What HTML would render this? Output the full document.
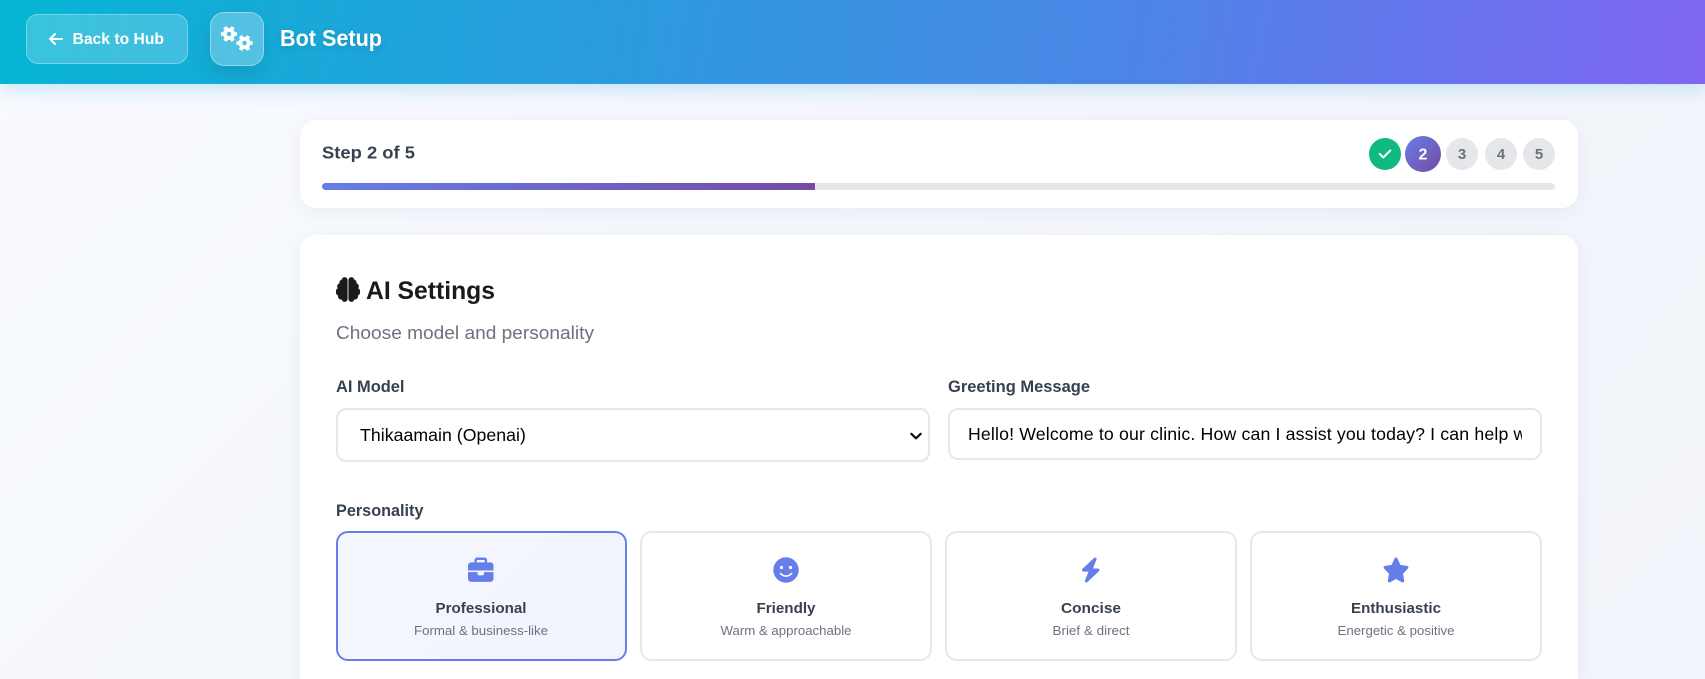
<!DOCTYPE html>
<html lang="en"><head><meta charset="utf-8"><title>Bot Setup</title>
<style>
*{box-sizing:border-box}
html,body{margin:0;padding:0;width:1705px;height:679px;overflow:hidden}
body{position:relative;background:linear-gradient(135deg,#f9fbff 0%,#f4f7fc 45%,#f1f4fa 100%);font-family:"Liberation Sans",sans-serif}
.abs{position:absolute}
.header{left:0;top:0;width:1705px;height:84px;background:linear-gradient(100deg,#06b6d4 0%,#4a86e6 65%,#8065f2 100%);box-shadow:0 4px 20px rgba(6,140,212,.22)}
.back{left:26px;top:14px;width:162px;height:50px;border-radius:12px;background:rgba(255,255,255,.2);border:1px solid rgba(255,255,255,.3)}
.gear{left:210px;top:12px;width:54px;height:54px;border-radius:14px;background:rgba(255,255,255,.27);border:1px solid rgba(255,255,255,.35);box-shadow:0 8px 20px rgba(0,0,0,.1)}
.card{background:#fff;box-shadow:0 4px 20px rgba(30,50,100,.06)}
.c1{left:300px;top:120px;width:1278px;height:88px;border-radius:16px}
.c2{left:300px;top:235px;width:1278px;height:444px;border-radius:16px 16px 0 0}
.track{left:322px;top:183px;width:1233px;height:7px;border-radius:4px;background:#e5e7eb}
.fill{left:322px;top:183px;width:493px;height:7px;border-radius:4px 0 0 4px;background:linear-gradient(90deg,#667eea,#764ba2)}
.dot{border-radius:50%;top:138px;width:32px;height:32px;background:#e5e7eb}
.field{border:2px solid #e5e7eb;border-radius:10px;background:#fff;color:#000;font:17.7px "Liberation Sans",sans-serif;outline:0}
select.field{left:336px;top:408px;width:594px;height:54px;padding:0 0 0 22px;letter-spacing:.04px;appearance:none;-webkit-appearance:none}
input.field{left:948px;top:408px;width:594px;height:52px;padding:0 18px;letter-spacing:.16px}
.p{top:531px;width:291.5px;height:130px;border-radius:12px;border:2px solid #e5e7eb;background:#fff}
.p.on{width:290.5px;border-color:#667eea;background:linear-gradient(135deg,#f5f7ff,#f1f4fd)}
svg.ov{position:absolute;left:0;top:0;pointer-events:none}
text{font-family:"Liberation Sans",sans-serif}
.lb{font-size:16.4px;font-weight:700;fill:#374151}
.t{font-size:15px;font-weight:700;fill:#374151;text-anchor:middle}
.s{font-size:12.8px;fill:#6b7280;text-anchor:middle}
.n{font-size:15px;font-weight:700;fill:#6b7280;text-anchor:middle}
</style></head><body>
<div class="abs header"></div>
<div class="abs back"></div>
<div class="abs gear"></div>
<div class="abs card c1"></div>
<div class="abs card c2"></div>
<div class="abs track"></div>
<div class="abs fill"></div>
<div class="abs dot" style="left:1369px;background:#10b981"></div>
<div class="abs dot" style="left:1405px;top:136px;width:36px;height:36px;background:linear-gradient(135deg,#667eea,#764ba2)"></div>
<div class="abs dot" style="left:1446px"></div>
<div class="abs dot" style="left:1485px"></div>
<div class="abs dot" style="left:1523px"></div>
<select class="abs field"><option>Thikaamain (Openai)</option></select>
<input class="abs field" value="Hello! Welcome to our clinic. How can I assist you today? I can help with appointments">
<div class="abs p on" style="left:336px"></div>
<div class="abs p" style="left:640px"></div>
<div class="abs p" style="left:945px"></div>
<div class="abs p" style="left:1250px"></div>

<svg class="ov" width="1705" height="679" viewBox="0 0 1705 679">
<!-- header -->
<svg x="49" y="31" width="14" height="16" viewBox="0 0 448 512"><path fill="#fff" d="M9.4 233.4c-12.5 12.5-12.5 32.8 0 45.3l160 160c12.5 12.5 32.8 12.5 45.3 0s12.5-32.8 0-45.3L109.2 288 416 288c17.7 0 32-14.3 32-32s-14.3-32-32-32l-306.7 0 105.4-105.4c12.5-12.5 12.5-32.8 0-45.3s-32.8-12.5-45.3 0l-160 160z"/></svg>
<text x="72.5" y="44" font-size="16" font-weight="700" fill="#fff" textLength="91.5" lengthAdjust="spacingAndGlyphs">Back to Hub</text>
<g fill="none" stroke="#fff">
<circle cx="229" cy="34" r="4.2" stroke-width="3.8"/>
<circle cx="229" cy="34" r="6.8" stroke-width="2.6" pathLength="60" stroke-dasharray="5 5" stroke-dashoffset="2.5"/>
<circle cx="244.5" cy="43" r="4.2" stroke-width="3.8"/>
<circle cx="244.5" cy="43" r="6.8" stroke-width="2.6" pathLength="60" stroke-dasharray="5 5" stroke-dashoffset="2.5"/>
</g>
<text x="280" y="46" font-size="23" font-weight="700" fill="#fff" textLength="102" lengthAdjust="spacingAndGlyphs" style="filter:drop-shadow(0 2px 4px rgba(0,0,0,.12))">Bot Setup</text>
<!-- step -->
<text x="322" y="158.5" font-size="17.5" font-weight="700" fill="#374151" textLength="93" lengthAdjust="spacingAndGlyphs">Step 2 of 5</text>
<svg x="1378" y="147" width="14" height="14" viewBox="0 0 448 512"><path fill="#fff" stroke="#fff" stroke-width="14" d="M438.6 105.4c12.5 12.5 12.5 32.8 0 45.3l-256 256c-12.5 12.5-32.8 12.5-45.3 0l-128-128c-12.5-12.5-12.5-32.8 0-45.3s32.8-12.5 45.3 0L160 338.7 393.4 105.4c12.5-12.5 32.8-12.5 45.3 0z"/></svg>
<text x="1423" y="159.5" font-size="16" font-weight="700" fill="#fff" text-anchor="middle">2</text>
<text x="1462" y="159" class="n">3</text>
<text x="1501" y="159" class="n">4</text>
<text x="1539" y="159" class="n">5</text>
<!-- heading -->
<svg x="336" y="277" width="24" height="25" viewBox="0 0 512 512"><path fill="#1a1a1a" stroke="#1a1a1a" stroke-width="14" d="M184 0c30.9 0 56 25.1 56 56V456c0 30.9-25.1 56-56 56c-28.9 0-52.7-21.9-55.7-50.1c-5.2 1.4-10.7 2.1-16.3 2.1c-35.3 0-64-28.7-64-64c0-7.4 1.3-14.6 3.6-21.2C21.4 367.4 0 338.2 0 304c0-31.9 18.7-59.5 45.8-72.3C37.1 220.8 32 207 32 192c0-30.7 21.6-56.3 50.4-62.6C80.8 123.9 80 118 80 112c0-29.9 20.6-55.1 48.3-62.1C131.3 21.9 155.1 0 184 0zM328 0c28.9 0 52.6 21.9 55.7 49.9c27.8 7 48.3 32.1 48.3 62.1c0 6-.8 11.9-2.4 17.4c28.8 6.2 50.4 31.9 50.4 62.6c0 15-5.1 28.8-13.8 39.7C493.3 244.5 512 272.1 512 304c0 34.2-21.4 63.4-51.6 74.8c2.3 6.6 3.6 13.8 3.6 21.2c0 35.3-28.7 64-64 64c-5.6 0-11.1-.7-16.3-2.1c-3 28.2-26.8 50.1-55.7 50.1c-30.9 0-56-25.1-56-56V56c0-30.9 25.1-56 56-56z"/></svg>
<text x="366" y="299" font-size="25" font-weight="700" fill="#1a1a1a" textLength="129" lengthAdjust="spacingAndGlyphs">AI Settings</text>
<text x="336" y="339" font-size="18.5" fill="#6b7280" textLength="258" lengthAdjust="spacingAndGlyphs">Choose model and personality</text>
<text x="336" y="392" class="lb" textLength="68.5" lengthAdjust="spacingAndGlyphs">AI Model</text>
<text x="948" y="392" class="lb" textLength="142" lengthAdjust="spacingAndGlyphs">Greeting Message</text>
<text x="336" y="516" class="lb" textLength="87.5" lengthAdjust="spacingAndGlyphs">Personality</text>
<!-- select chevron -->
<path d="M911.3 433.8l4.7 4.5 4.7-4.5" fill="none" stroke="#111" stroke-width="2.2" stroke-linecap="round" stroke-linejoin="round"/>
<!-- personality -->
<svg x="468" y="557.5" width="25.5" height="26" viewBox="0 0 512 512" preserveAspectRatio="none"><path fill="#667eea" d="M184 48H328c4.4 0 8 3.6 8 8V96H176V56c0-4.4 3.6-8 8-8zm-56 8V96H64C28.7 96 0 124.7 0 160v96H192 320 512V160c0-35.3-28.7-64-64-64H384V56c0-30.9-25.1-56-56-56H184c-30.9 0-56 25.1-56 56zM512 288H320v32c0 17.7-14.3 32-32 32H224c-17.7 0-32-14.3-32-32V288H0V416c0 35.3 28.7 64 64 64H448c35.3 0 64-28.7 64-64V288z"/></svg>
<circle cx="786" cy="570" r="12.7" fill="#667eea"/>
<circle cx="781.5" cy="567.5" r="1.6" fill="#fff"/><circle cx="790.5" cy="567.5" r="1.6" fill="#fff"/>
<path d="M780.5 573.5c3 3.4 8 3.4 11 0" fill="none" stroke="#fff" stroke-width="1.7" stroke-linecap="round"/>
<svg x="1080.5" y="557.5" width="20.5" height="25" viewBox="0 0 448 512" preserveAspectRatio="none"><path fill="#667eea" d="M349.4 44.6c5.9-13.7 1.5-29.7-10.6-38.5s-28.6-8-39.9 1.8l-256 224c-10 8.8-13.6 22.9-8.9 35.3S50.7 288 64 288H175.5L98.6 467.4c-5.9 13.7-1.5 29.7 10.6 38.5s28.6 8 39.9-1.8l256-224c10-8.8 13.6-22.9 8.9-35.3s-16.6-20.7-30-20.7H272.5L349.4 44.6z"/></svg>
<svg x="1382.5" y="557.5" width="27" height="25" viewBox="0 0 576 512" preserveAspectRatio="none"><path fill="#667eea" d="M316.9 18C311.6 7 300.4 0 288.1 0s-23.4 7-28.8 18L195 150.3 51.4 171.5c-12 1.8-22 10.2-25.7 21.7s-.7 24.2 7.9 32.7L137.8 329 113.2 474.7c-2 12 3 24.2 12.9 31.3s23 8 33.8 2.3l128.3-68.5 128.3 68.5c10.8 5.7 23.9 4.9 33.8-2.3s14.9-19.3 12.9-31.3L438.5 329 542.7 225.9c8.6-8.5 11.7-21.2 7.9-32.7s-13.7-19.9-25.7-21.7L381.2 150.3 316.9 18z"/></svg>
<text x="481" y="613" class="t" textLength="91" lengthAdjust="spacingAndGlyphs">Professional</text>
<text x="481" y="635" class="s" textLength="134" lengthAdjust="spacingAndGlyphs">Formal &amp; business-like</text>
<text x="786" y="613" class="t" textLength="59" lengthAdjust="spacingAndGlyphs">Friendly</text>
<text x="786" y="635" class="s" textLength="131" lengthAdjust="spacingAndGlyphs">Warm &amp; approachable</text>
<text x="1091" y="613" class="t" textLength="60" lengthAdjust="spacingAndGlyphs">Concise</text>
<text x="1091" y="635" class="s" textLength="77" lengthAdjust="spacingAndGlyphs">Brief &amp; direct</text>
<text x="1396" y="613" class="t" textLength="90" lengthAdjust="spacingAndGlyphs">Enthusiastic</text>
<text x="1396" y="635" class="s" textLength="117" lengthAdjust="spacingAndGlyphs">Energetic &amp; positive</text>
</svg>
</body></html>
